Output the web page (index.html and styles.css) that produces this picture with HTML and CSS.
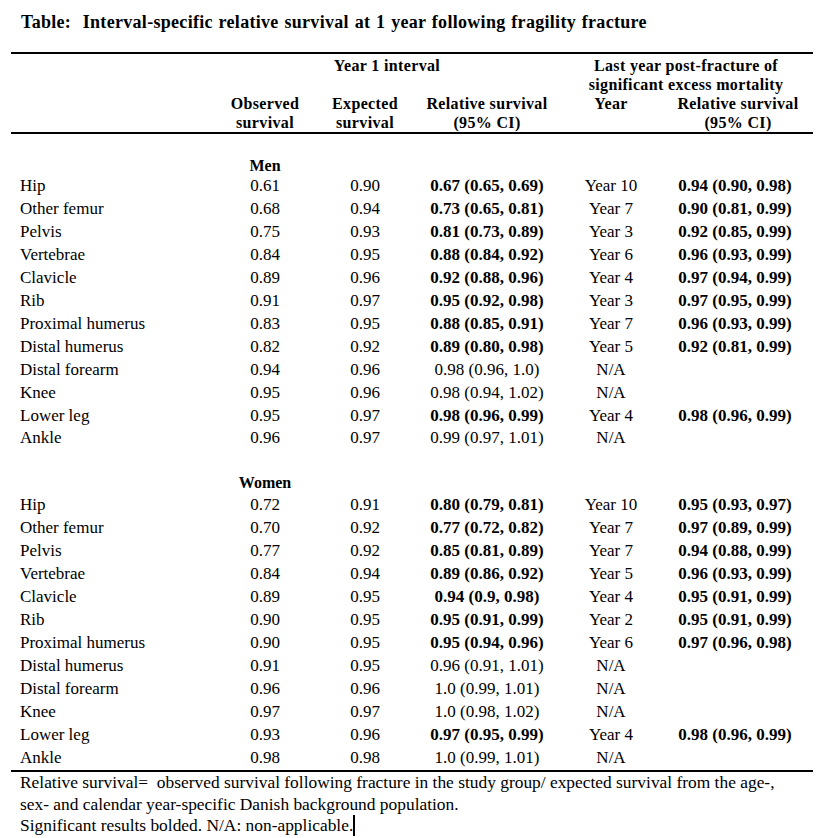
FILE: index.html
```html
<!DOCTYPE html>
<html>
<head>
<meta charset="utf-8">
<link rel="stylesheet" href="styles.css">
</head>
<body>
<div class="page">
  <h1 class="title">Table:&nbsp; Interval-specific relative survival at 1 year following fragility fracture</h1>
  <table class="tbl">
    <colgroup>
      <col class="c-label"><col class="c-obs"><col class="c-exp"><col class="c-rel"><col class="c-year"><col class="c-last">
    </colgroup>
    <thead>
      <tr class="h1">
        <th></th>
        <th colspan="3" class="grp-a">Year 1 interval</th>
        <th colspan="2" class="grp-b">Last year post-fracture of<br>significant excess mortality</th>
      </tr>
      <tr class="h2">
        <th></th>
        <th>Observed<br>survival</th>
        <th>Expected<br>survival</th>
        <th class="h-rel">Relative survival<br>(95% CI)</th>
        <th>Year</th>
        <th class="h-last">Relative survival<br>(95% CI)</th>
      </tr>
    </thead>
    <tbody>
      <tr class="spacer"><td colspan="6"></td></tr>
      <tr class="sex sex-men"><td></td><td class="sexname">Men</td><td colspan="4"></td></tr>
      <tr><td class="lbl">Hip</td><td>0.61</td><td>0.90</td><td class="b">0.67 (0.65, 0.69)</td><td>Year 10</td><td class="b last">0.94 (0.90, 0.98)</td></tr>
      <tr><td class="lbl">Other femur</td><td>0.68</td><td>0.94</td><td class="b">0.73 (0.65, 0.81)</td><td>Year 7</td><td class="b last">0.90 (0.81, 0.99)</td></tr>
      <tr><td class="lbl">Pelvis</td><td>0.75</td><td>0.93</td><td class="b">0.81 (0.73, 0.89)</td><td>Year 3</td><td class="b last">0.92 (0.85, 0.99)</td></tr>
      <tr><td class="lbl">Vertebrae</td><td>0.84</td><td>0.95</td><td class="b">0.88 (0.84, 0.92)</td><td>Year 6</td><td class="b last">0.96 (0.93, 0.99)</td></tr>
      <tr><td class="lbl">Clavicle</td><td>0.89</td><td>0.96</td><td class="b">0.92 (0.88, 0.96)</td><td>Year 4</td><td class="b last">0.97 (0.94, 0.99)</td></tr>
      <tr><td class="lbl">Rib</td><td>0.91</td><td>0.97</td><td class="b">0.95 (0.92, 0.98)</td><td>Year 3</td><td class="b last">0.97 (0.95, 0.99)</td></tr>
      <tr><td class="lbl">Proximal humerus</td><td>0.83</td><td>0.95</td><td class="b">0.88 (0.85, 0.91)</td><td>Year 7</td><td class="b last">0.96 (0.93, 0.99)</td></tr>
      <tr><td class="lbl">Distal humerus</td><td>0.82</td><td>0.92</td><td class="b">0.89 (0.80, 0.98)</td><td>Year 5</td><td class="b last">0.92 (0.81, 0.99)</td></tr>
      <tr><td class="lbl">Distal forearm</td><td>0.94</td><td>0.96</td><td>0.98 (0.96, 1.0)</td><td>N/A</td><td class="last"></td></tr>
      <tr><td class="lbl">Knee</td><td>0.95</td><td>0.96</td><td>0.98 (0.94, 1.02)</td><td>N/A</td><td class="last"></td></tr>
      <tr><td class="lbl">Lower leg</td><td>0.95</td><td>0.97</td><td class="b">0.98 (0.96, 0.99)</td><td>Year 4</td><td class="b last">0.98 (0.96, 0.99)</td></tr>
      <tr><td class="lbl">Ankle</td><td>0.96</td><td>0.97</td><td>0.99 (0.97, 1.01)</td><td>N/A</td><td class="last"></td></tr>
      <tr class="spacer spacer-w"><td colspan="6"></td></tr>
      <tr class="sex sex-women"><td></td><td class="sexname">Women</td><td colspan="4"></td></tr>
      <tr><td class="lbl">Hip</td><td>0.72</td><td>0.91</td><td class="b">0.80 (0.79, 0.81)</td><td>Year 10</td><td class="b last">0.95 (0.93, 0.97)</td></tr>
      <tr><td class="lbl">Other femur</td><td>0.70</td><td>0.92</td><td class="b">0.77 (0.72, 0.82)</td><td>Year 7</td><td class="b last">0.97 (0.89, 0.99)</td></tr>
      <tr><td class="lbl">Pelvis</td><td>0.77</td><td>0.92</td><td class="b">0.85 (0.81, 0.89)</td><td>Year 7</td><td class="b last">0.94 (0.88, 0.99)</td></tr>
      <tr><td class="lbl">Vertebrae</td><td>0.84</td><td>0.94</td><td class="b">0.89 (0.86, 0.92)</td><td>Year 5</td><td class="b last">0.96 (0.93, 0.99)</td></tr>
      <tr><td class="lbl">Clavicle</td><td>0.89</td><td>0.95</td><td class="b">0.94 (0.9, 0.98)</td><td>Year 4</td><td class="b last">0.95 (0.91, 0.99)</td></tr>
      <tr><td class="lbl">Rib</td><td>0.90</td><td>0.95</td><td class="b">0.95 (0.91, 0.99)</td><td>Year 2</td><td class="b last">0.95 (0.91, 0.99)</td></tr>
      <tr><td class="lbl">Proximal humerus</td><td>0.90</td><td>0.95</td><td class="b">0.95 (0.94, 0.96)</td><td>Year 6</td><td class="b last">0.97 (0.96, 0.98)</td></tr>
      <tr><td class="lbl">Distal humerus</td><td>0.91</td><td>0.95</td><td>0.96 (0.91, 1.01)</td><td>N/A</td><td class="last"></td></tr>
      <tr><td class="lbl">Distal forearm</td><td>0.96</td><td>0.96</td><td>1.0 (0.99, 1.01)</td><td>N/A</td><td class="last"></td></tr>
      <tr><td class="lbl">Knee</td><td>0.97</td><td>0.97</td><td>1.0 (0.98, 1.02)</td><td>N/A</td><td class="last"></td></tr>
      <tr><td class="lbl">Lower leg</td><td>0.93</td><td>0.96</td><td class="b">0.97 (0.95, 0.99)</td><td>Year 4</td><td class="b last">0.98 (0.96, 0.99)</td></tr>
      <tr class="final"><td class="lbl">Ankle</td><td>0.98</td><td>0.98</td><td>1.0 (0.99, 1.01)</td><td>N/A</td><td class="last"></td></tr>
    </tbody>
  </table>
  <div class="foot">
    <p>Relative survival=&nbsp; observed survival following fracture in the study group/ expected survival from the age-,</p>
    <p>sex- and calendar year-specific Danish background population.</p>
    <p>Significant results bolded. N/A: non-applicable.<span class="caret"></span></p>
  </div>
</div>
</body>
</html>
```

FILE: styles.css
```css
html, body {
  margin: 0;
  padding: 0;
  background: #fff;
}
body {
  font-family: "Liberation Serif", "Times New Roman", serif;
  color: #000;
}
.page {
  width: 816px;
  height: 838px;
  overflow: hidden;
  padding-left: 11px;
  box-sizing: border-box;
}
.title {
  margin: 0;
  padding: 12px 0 0 10px;
  height: 52px;
  box-sizing: border-box;
  font-size: 18px;
  line-height: 20px;
  font-weight: bold;
  letter-spacing: 0.3px;
  word-spacing: 1px;
}
.tbl {
  width: 802px;
  table-layout: fixed;
  border-collapse: collapse;
  border-spacing: 0;
}
.c-label { width: 204px; }
.c-obs { width: 100px; }
.c-exp { width: 100px; }
.c-rel { width: 144px; }
.c-year { width: 104px; }
.c-last { width: 150px; }
.tbl th, .tbl td {
  padding: 0;
  text-align: center;
  white-space: nowrap;
}
.tbl thead {
  border-top: 2px solid #000;
  border-bottom: 2px solid #000;
}
.tbl th {
  font-size: 16px;
  font-weight: bold;
  line-height: 19px;
  vertical-align: top;
  letter-spacing: 0.35px;
}
.h1 th { padding-top: 2px; }
.h1 .grp-a { height: 38px; }
.grp-b { padding-left: 8px; padding-right: 6px; }
.h-last { padding-right: 6px; }
.tbl td {
  font-size: 17px;
  line-height: 22.95px;
  height: 22.95px;
}
.tbl td.lbl {
  text-align: left;
  padding-left: 9px;
}
.tbl td.b { font-weight: bold; }
.tbl td.last { padding-right: 6px; }
.spacer td { height: 23px; line-height: 23px; }
.spacer-w td { height: 21px; line-height: 21px; }
.sex td { font-weight: bold; font-size: 16px; }
.sex-men td { height: 18px; line-height: 18px; }
.sex-women td { height: 23px; line-height: 23px; }
.final td { border-bottom: 2px solid #000; }
.foot {
  padding-left: 9px;
  font-size: 17.4px;
  line-height: 21.7px;
}
.foot p { margin: 0; }
.caret {
  display: inline-block;
  width: 2px;
  height: 21px;
  background: #000;
  vertical-align: -5px;
}
```
